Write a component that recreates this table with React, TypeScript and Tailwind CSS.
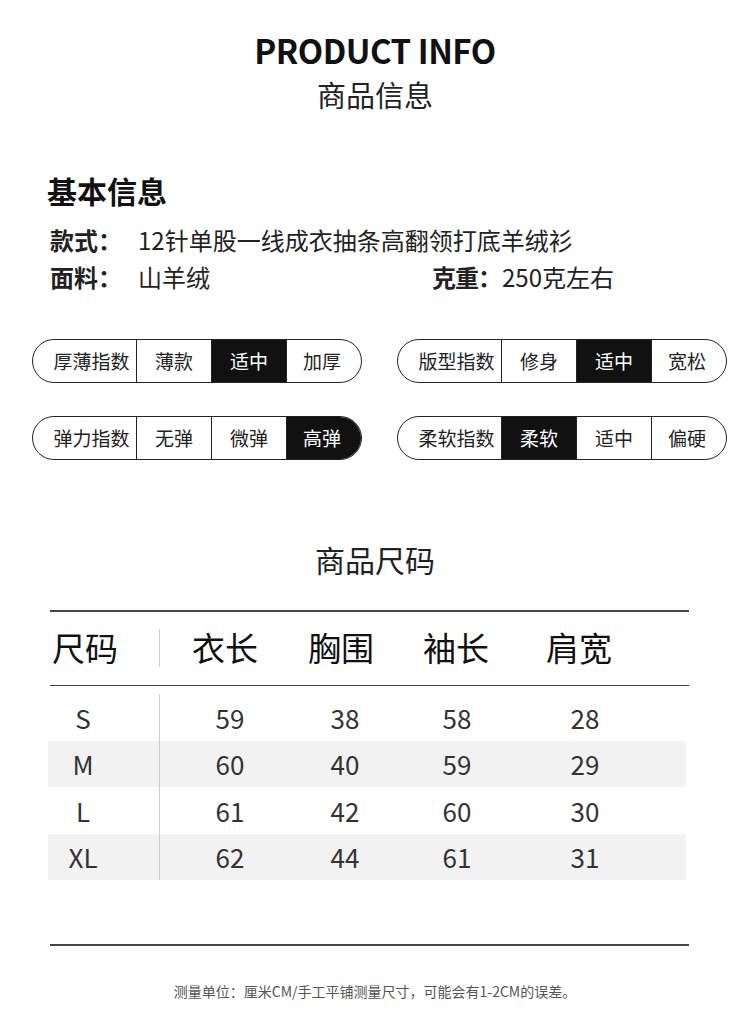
import React from 'react';

const font = { fontFamily: '"Noto Sans CJK SC", "Noto Sans", sans-serif' };

type Scale = { label: string; options: string[]; active: number };

const scalesLeft: Scale[] = [
  { label: '厚薄指数', options: ['薄款', '适中', '加厚'], active: 1 },
  { label: '弹力指数', options: ['无弹', '微弹', '高弹'], active: 2 },
];

const scalesRight: Scale[] = [
  { label: '版型指数', options: ['修身', '适中', '宽松'], active: 1 },
  { label: '柔软指数', options: ['柔软', '适中', '偏硬'], active: 0 },
];

const sizes = [
  ['S', '59', '38', '58', '28'],
  ['M', '60', '40', '59', '29'],
  ['L', '61', '42', '60', '30'],
  ['XL', '62', '44', '61', '31'],
];

function ScalePill({ scale }: { scale: Scale }) {
  return (
    <div className="flex h-[44px] w-[330px] overflow-hidden rounded-full border-[1.5px] border-[#222] text-[19px] text-[#222]">
      <div className="flex w-[103px] items-center justify-center pl-[14px]">{scale.label}</div>
      {scale.options.map((opt, i) => (
        <div
          key={opt}
          className={
            'flex flex-1 items-center justify-center border-l-[1.5px] border-[#222] ' +
            (i === scale.active ? 'bg-[#111] text-white' : '')
          }
        >
          <span className={i === scale.options.length - 1 ? 'pr-1' : ''}>{opt}</span>
        </div>
      ))}
    </div>
  );
}

export default function App() {
  return (
    <div className="w-[750px] h-[1025px] bg-white text-[#222]" style={font}>
      <div className="pt-[30px] text-center">
        <h1 className="text-[33px] font-bold leading-[40px] tracking-[-0.5px] text-[#111]">PRODUCT INFO</h1>
        <p className="mt-[6px] text-[29px] leading-[36px] text-[#222]">商品信息</p>
      </div>

      <div className="pl-[47px] pt-[60px]">
        <h2 className="text-[30px] font-bold leading-[36px] text-[#111]">基本信息</h2>
        <div className="mt-[17px] flex whitespace-nowrap text-[24px] leading-[30px]">
          <span className="w-[91px] shrink-0 pl-[3px] font-bold">款式：</span>
          <span>12针单股一线成衣抽条高翻领打底羊绒衫</span>
        </div>
        <div className="mt-[7px] flex whitespace-nowrap text-[24px] leading-[30px]">
          <span className="w-[91px] shrink-0 pl-[3px] font-bold">面料：</span>
          <span className="w-[294px] shrink-0">山羊绒</span>
          <span className="w-[70px] shrink-0 font-bold tracking-[-1px]">克重：</span>
          <span>250克左右</span>
        </div>
      </div>

      <div className="mt-[47px] flex gap-[35px] pl-[32px]">
        <div className="flex flex-col gap-[33px]">
          {scalesLeft.map((s) => (
            <ScalePill key={s.label} scale={s} />
          ))}
        </div>
        <div className="flex flex-col gap-[33px]">
          {scalesRight.map((s) => (
            <ScalePill key={s.label} scale={s} />
          ))}
        </div>
      </div>

      <p className="mt-[81px] text-center text-[30px] leading-[36px] text-[#222]">商品尺码</p>

      <div className="mx-[50px] mt-[33px] w-[639px]">
        <div className="h-[1.5px] bg-[#444]" />
        <div className="flex h-[73px] items-center text-[33px] text-[#111]">
          <div className="flex h-[38px] w-[110px] items-center border-r border-[#ccc]">
            <span className="w-[70px] text-center">尺码</span>
          </div>
          <span className="ml-[25px] w-[80px] text-center">衣长</span>
          <span className="ml-[36px] w-[80px] text-center">胸围</span>
          <span className="ml-[35px] w-[80px] text-center">袖长</span>
          <span className="ml-[43px] w-[80px] text-center">肩宽</span>
        </div>
        <div className="h-[1.5px] bg-[#444]" />
      </div>

      <div className="ml-[48px] mt-[8px] w-[638px] text-[26px] text-[#333]">
        {sizes.map((row, r) => (
          <div
            key={row[0]}
            className={'flex h-[46.5px] items-center ' + (r % 2 === 1 ? 'bg-[#f2f2f2]' : '')}
          >
            <div className="flex h-full w-[112px] items-center border-r border-[#ccc]">
              <span className="w-[70px] text-center">{row[0]}</span>
            </div>
            <span className="ml-[30px] w-[80px] text-center">{row[1]}</span>
            <span className="ml-[35px] w-[80px] text-center">{row[2]}</span>
            <span className="ml-[32px] w-[80px] text-center">{row[3]}</span>
            <span className="ml-[48px] w-[80px] text-center">{row[4]}</span>
          </div>
        ))}
      </div>

      <div className="mx-[50px] mt-[64px] h-[1.5px] w-[639px] bg-[#444]" />
      <p className="mt-[35px] text-center text-[14px] leading-[20px] text-[#555]">
        测量单位：厘米CM/手工平铺测量尺寸，可能会有1-2CM的误差。
      </p>
    </div>
  );
}
